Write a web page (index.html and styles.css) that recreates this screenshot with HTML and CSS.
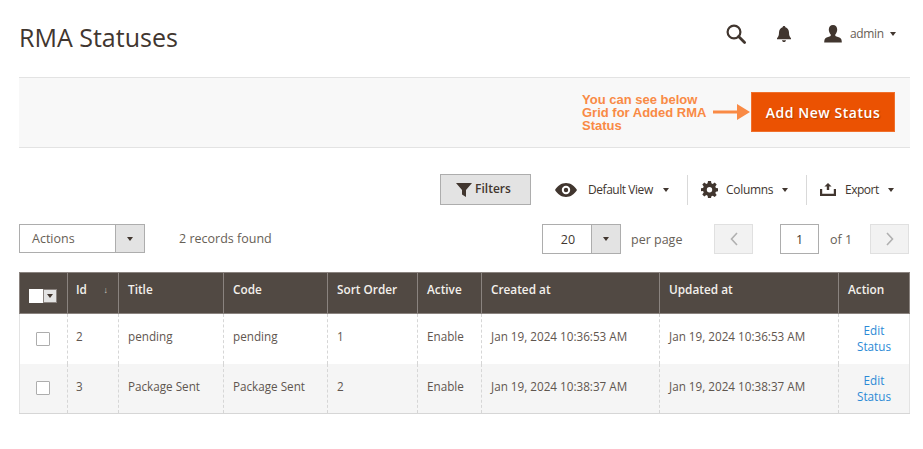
FILE: index.html
```html
<!DOCTYPE html>
<html lang="en">
<head>
<meta charset="utf-8">
<title>RMA Statuses</title>
<link rel="stylesheet" href="styles.css">
</head>
<body>
<div class="page">
  <header class="header">
    <h1 class="title">RMA Statuses</h1>
    <div class="user-actions">
      <svg class="ico-search" width="22" height="22" viewBox="0 0 22 22"><circle cx="9" cy="9" r="6.4" fill="none" stroke="#41362f" stroke-width="2.2"/><path d="M13.6 13.6l6 6" stroke="#41362f" stroke-width="2.8" stroke-linecap="round"/></svg>
      <svg class="ico-bell" width="16" height="18" viewBox="0 0 16 18"><path d="M8 1c.8 0 1.3.5 1.4 1.2C11.6 2.9 13 4.800 13 7.500c0 2.500.5 4.300 2 5.800v1H1v-1c1.500-1.500 2-3.300 2-5.800C3 4.800 4.400 2.900 6.600 2.200 6.700 1.500 7.200 1 8 1zM6 15.200h4C9.900 16.400 9.100 17 8 17s-1.900-.6-2-1.800z" fill="#41362f"/></svg>
      <div class="user">
        <svg class="ico-user" width="18" height="18" viewBox="0 0 18 18"><path d="M9 0c2.600 0 4.200 1.900 4.200 4.600 0 2-.8 3.700-1.900 4.900-.3 1 .1 1.600 1.200 2.100 1.900.8 4.100 1.200 4.900 2.800.3.800.4 2 .4 3.100H.2c0-1.100.1-2.300.4-3.100.8-1.600 3-2 4.900-2.800 1.100-.5 1.500-1.100 1.200-2.100C5.600 8.300 4.800 6.600 4.800 4.600 4.800 1.900 6.400 0 9 0z" fill="#41362f"/></svg>
        <span class="user-name">admin</span>
        <span class="caret caret-small"></span>
      </div>
    </div>
  </header>

  <section class="action-bar">
    <div class="note">You can see below<br>Grid for Added RMA<br>Status</div>
    <svg class="note-arrow" width="37" height="18" viewBox="0 0 37 18"><path d="M0 7.500h24V1l13 8-13 8v-6.500H0z" fill="#f98a45"/></svg>
    <button class="primary-btn" type="button">Add New Status</button>
  </section>

  <section class="grid-tools">
    <button class="filters-btn" type="button">
      <svg width="16" height="14" viewBox="0 0 16 14"><path d="M0 0h16L10 7v7L6 11.500V7z" fill="#41362f"/></svg>
      <span>Filters</span>
    </button>
    <div class="tool tool-view">
      <svg width="22" height="14" viewBox="0 0 22 14"><path fill-rule="evenodd" d="M11 0c4.600 0 8.500 2.800 11 7-2.500 4.200-6.400 7-11 7S2.500 11.200 0 7c2.500-4.200 6.400-7 11-7zm0 2.800a4.200 4.200 0 1 0 0 8.400 4.200 4.200 0 0 0 0-8.400zm0 2a2.200 2.200 0 1 1 0 4.400 2.200 2.200 0 0 1 0-4.400z" fill="#41362f"/></svg>
      <span class="tool-label">Default View</span>
      <span class="caret"></span>
    </div>
    <div class="tool tool-columns">
      <svg width="17" height="17" viewBox="0 0 17 17"><path fill-rule="evenodd" d="M7 0h3l.4 2.300 1.300.6L13.700 1.500l2 2-1.400 2 .6 1.400 2.100.4v3l-2.100.4-.6 1.400 1.400 2-2 2-2-1.400-1.300.6L10 17H7l-.4-2.300-1.300-.6-2 1.400-2-2 1.400-2-.6-1.400L0 10.300v-3l2.100-.4.6-1.400-1.400-2 2-2 2 1.400 1.300-.6zM8.500 6a2.700 2.700 0 1 0 0 5.400 2.700 2.700 0 0 0 0-5.400z" fill="#41362f"/></svg>
      <span class="tool-label">Columns</span>
      <span class="caret"></span>
    </div>
    <div class="tool tool-export">
      <svg width="16" height="13" viewBox="0 0 16 13"><path d="M8 0l3.600 3.600H9.200V7H6.800V3.600H4.400zM0 6h2.200v4.800h11.600V6H16v7H0z" fill="#41362f"/></svg>
      <span class="tool-label">Export</span>
      <span class="caret"></span>
    </div>
  </section>

  <section class="pager-row">
    <div class="select-box select-actions">
      <span class="select-value">Actions</span>
      <span class="select-arrow"><span class="caret"></span></span>
    </div>
    <span class="records">2 records found</span>
    <div class="pager">
      <div class="select-box select-page">
        <span class="select-value">20</span>
        <span class="select-arrow"><span class="caret"></span></span>
      </div>
      <span class="per-page">per page</span>
      <span class="page-btn page-prev"><svg width="10" height="16" viewBox="0 0 10 16"><path d="M8 2L2.500 8 8 14" fill="none" stroke="#b0b0b0" stroke-width="1.600"/></svg></span>
      <span class="page-input">1</span>
      <span class="of">of 1</span>
      <span class="page-btn"><svg width="10" height="16" viewBox="0 0 10 16"><path d="M2 2l5.500 6L2 14" fill="none" stroke="#b0b0b0" stroke-width="1.600"/></svg></span>
    </div>
  </section>

  <table class="grid">
    <colgroup>
      <col class="c-check"><col class="c-id"><col class="c-title"><col class="c-code"><col class="c-sort"><col class="c-active"><col class="c-date"><col class="c-date2"><col class="c-action">
    </colgroup>
    <thead>
      <tr>
        <th><span class="mass"><span class="mass-box"></span><span class="mass-arrow"><span class="caret caret-small"></span></span></span></th>
        <th class="cell-id"><span class="id-head"><span>Id</span><span class="sort">↓</span></span></th>
        <th>Title</th>
        <th>Code</th>
        <th>Sort Order</th>
        <th>Active</th>
        <th>Created at</th>
        <th>Updated at</th>
        <th>Action</th>
      </tr>
    </thead>
    <tbody>
      <tr>
        <td><span class="check"></span></td>
        <td class="cell-id">2</td>
        <td>pending</td>
        <td>pending</td>
        <td>1</td>
        <td>Enable</td>
        <td>Jan 19, 2024 10:36:53 AM</td>
        <td>Jan 19, 2024 10:36:53 AM</td>
        <td class="cell-action"><a href="#">Edit Status</a></td>
      </tr>
      <tr class="alt">
        <td><span class="check"></span></td>
        <td class="cell-id">3</td>
        <td>Package Sent</td>
        <td>Package Sent</td>
        <td>2</td>
        <td>Enable</td>
        <td>Jan 19, 2024 10:38:37 AM</td>
        <td>Jan 19, 2024 10:38:37 AM</td>
        <td class="cell-action"><a href="#">Edit Status</a></td>
      </tr>
    </tbody>
  </table>
</div>
</body>
</html>
```
FILE: styles.css
```css
* { box-sizing: border-box; }
html, body { margin: 0; padding: 0; background: #fff; }
body { font-family: "Open Sans", sans-serif; color: #41362f; font-size: 12px; overflow: hidden; }
.page { width: 923px; height: 449px; padding: 0 13px 0 19px; }

.caret { display: inline-block; width: 0; height: 0; border-left: 3.5px solid transparent; border-right: 3.5px solid transparent; border-top: 4px solid #41362f; }
.caret-small { border-left-width: 3px; border-right-width: 3px; border-top-width: 4px; }

.header { display: flex; align-items: center; justify-content: space-between; height: 78px; border-bottom: 1px solid #e3e3e3; }
.title { margin: 0; font-size: 25px; font-weight: 400; line-height: 36px; color: #41362f; transform: translateY(-2px); }
.user-actions { display: flex; align-items: center; transform: translateY(-5px); }
.ico-search { margin-right: 29px; }
.ico-bell { margin-right: 32px; }
.user { display: flex; align-items: center; width: 86px; }
.ico-user { margin-right: 8px; }
.user-name { font-size: 12px; letter-spacing: -.35px; color: #676056; margin-right: 6px; }

.action-bar { display: flex; align-items: center; height: 70px; background: #f8f8f8; border-bottom: 1px solid #e3e3e3; padding: 0 15px 1px 0; justify-content: flex-end; }
.note { font-family: "Liberation Sans", sans-serif; font-weight: 700; font-size: 13px; line-height: 13px; color: #f98a45; width: 131px; }
.note-arrow { margin-right: 1px; }
.primary-btn { width: 144px; height: 40px; background: #eb5202; border: 1px solid #f0702c; color: #fff; font-family: "Open Sans", sans-serif; font-size: 14px; font-weight: 600; letter-spacing: .55px; padding: 0; text-shadow: 1px 1px 1px rgba(0,0,0,.25); }

.grid-tools { display: flex; align-items: center; height: 31px; margin-top: 26px; padding-left: 421px; }
.filters-btn { display: flex; align-items: center; justify-content: center; gap: 3px; width: 91px; height: 31px; padding: 0 4px 2px 0; background: #e3e3e3; border: 1px solid #adadad; color: #41362f; font-family: "Open Sans", sans-serif; font-size: 12px; font-weight: 600; }
.filters-btn svg { margin-top: 2px; }
.tool { display: flex; align-items: center; height: 30px; color: #41362f; }
.tool-label { font-size: 12px; }
.tool-view { margin-left: 24px; width: 133px; border-right: 1px solid #d9d9d9; }
.tool-view svg { margin-right: 11px; }
.tool-view .tool-label { margin-right: 10px; letter-spacing: -.45px; }
.tool-columns { margin-left: 13px; width: 106px; border-right: 1px solid #d9d9d9; }
.tool-columns svg { margin-right: 8px; }
.tool-columns .tool-label { margin-right: 9px; letter-spacing: -.3px; }
.tool-export { margin-left: 13px; }
.tool-export svg { margin-right: 9px; }
.tool-export .tool-label { margin-right: 9px; letter-spacing: -.5px; }

.pager-row { display: flex; align-items: flex-start; height: 30px; margin-top: 19px; }
.select-box { display: flex; height: 29px; border: 1px solid #adadad; background: #fff; }
.select-value { flex: 1; display: flex; align-items: center; font-size: 12.5px; }
.select-arrow { display: flex; align-items: center; justify-content: center; width: 29px; background: #e3e3e3; border-left: 1px solid #adadad; }
.select-actions { width: 126px; }
.select-actions .select-value { padding-left: 12px; color: #676056; }
.records { margin-left: 34px; font-size: 12.5px; line-height: 29px; color: #676056; }
.pager { display: flex; align-items: center; margin-left: auto; margin-right: 1px; }
.select-page { width: 79px; height: 30px; }
.select-page .select-value { justify-content: center; color: #41362f; padding-left: 2px; }
.per-page { margin-left: 10px; width: 83px; font-size: 12.5px; color: #676056; }
.page-btn { display: flex; align-items: center; justify-content: center; width: 39px; height: 30px; background: #f2f2f2; border: 1px solid #e0e0e0; }
.page-prev { margin-right: 27px; }
.page-input { display: flex; align-items: center; justify-content: center; width: 39px; height: 30px; border: 1px solid #adadad; font-size: 12.5px; }
.of { margin-left: 11px; width: 40px; font-size: 12.5px; color: #676056; }

.grid { width: 890px; margin-top: 18px; border-collapse: collapse; table-layout: fixed; font-size: 11.7px; }
.c-check { width: 48px; } .c-id { width: 51px; } .c-title { width: 105px; } .c-code { width: 104px; } .c-sort { width: 90px; } .c-active { width: 64px; } .c-date { width: 178px; } .c-date2 { width: 179px; } .c-action { width: 71px; }
.grid th { height: 41px; padding: 0 9px 8px; background: #514943; border: 1px solid #8a837f; color: #f3f0ec; font-weight: 600; text-align: left; font-size: 11.8px; }
.grid th:first-child { padding: 0 0 0 9px; }
.grid .cell-id { padding-left: 8px; }
.grid td { height: 50px; padding: 0 9px 5px; border-left: 1px dashed #d6d6d6; border-right: 1px dashed #d6d6d6; color: #5f564f; }
.grid tr td:first-child { border-left: 1px solid #e3e3e3; padding: 0 0 0 16px; }
.grid tr td:last-child { border-right: 1px solid #e3e3e3; }
.grid tbody tr:last-child td { border-bottom: 1px solid #d6d6d6; }
.grid td.cell-action { text-align: center; line-height: 16px; padding: 0 9px 1px; }
.alt td { background: #f5f5f5; }
.mass { display: inline-flex; width: 28px; height: 14px; margin-top: 6px; vertical-align: middle; }
.mass-box { width: 14px; background: #fff; }
.mass-arrow { display: flex; align-items: center; justify-content: center; flex: 1; background: #e3e3e3; border: 1px solid #8a837f; }
.id-head { display: flex; justify-content: space-between; }
.sort { font-size: 9px; font-weight: 400; padding-top: 2px; padding-right: 1px; color: #cfc9c4; }
.check { display: block; width: 14px; height: 14px; background: #fff; border: 1px solid #adadad; border-radius: 1px; }
.cell-action a { color: #2b8ad6; text-decoration: none; display: block; padding: 0 6px; }
```
